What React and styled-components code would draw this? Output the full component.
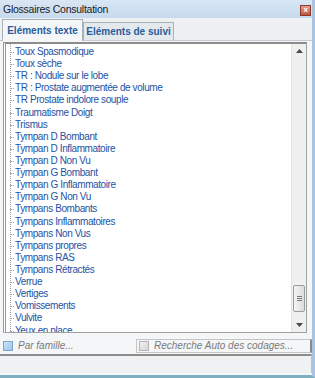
import styled, { createGlobalStyle } from "styled-components";

const Global = createGlobalStyle`
  html, body { margin: 0; padding: 0; background: #fff; }
  body { font-family: "Liberation Sans", Arial, sans-serif; }
`;

const items = [
  "Toux Spasmodique",
  "Toux sèche",
  "TR : Nodule sur le lobe",
  "TR : Prostate augmentée de volume",
  "TR Prostate  indolore souple",
  "Traumatisme Doigt",
  "Trismus",
  "Tympan D Bombant",
  "Tympan D Inflammatoire",
  "Tympan D Non Vu",
  "Tympan G Bombant",
  "Tympan G Inflammatoire",
  "Tympan G Non Vu",
  "Tympans Bombants",
  "Tympans Inflammatoires",
  "Tympans Non Vus",
  "Tympans propres",
  "Tympans RAS",
  "Tympans Rétractés",
  "Verrue",
  "Vertiges",
  "Vomissements",
  "Vulvite",
  "Yeux en place",
];

const Window = styled.div`
  width: 315px;
  height: 378px;
  box-sizing: border-box;
  background: #eef0f2;
  border-right: 3px solid #a9c4e2;
  border-bottom: 3px solid #7fb0c0;
  display: flex;
  flex-direction: column;
  overflow: hidden;
`;

const TitleBar = styled.div`
  height: 18px;
  display: flex;
  align-items: center;
  justify-content: space-between;
  padding: 0 1px 0 3px;
  background: linear-gradient(#d9e6f4, #c6d9ee);
  font-size: 10.5px;
  letter-spacing: -0.25px;
  color: #1b1b1b;
`;

const Close = styled.div`
  width: 9px;
  height: 9px;
  margin-top: 2px;
  border: 1px solid #8a3a2a;
  background: linear-gradient(#e8a08a, #c0553b);
  display: flex;
  align-items: center;
  justify-content: center;
  color: #fff;
  font-size: 8px;
  line-height: 1;
  font-weight: bold;
`;

const Tabs = styled.div`
  display: flex;
  align-items: flex-end;
  height: 22px;
  padding: 0 0 0 2px;
  border-bottom: 1px solid #c8ccd2;
`;

const Tab = styled.div`
  box-sizing: border-box;
  width: ${(p) => p.$w};
  height: ${(p) => (p.$active ? "22px" : "18px")};
  display: flex;
  align-items: center;
  justify-content: center;
  font-size: 10px;
  font-weight: bold;
  white-space: nowrap;
  color: #2a5d9a;
  background: ${(p) => (p.$active ? "#f4f6f8" : "#e4e9ee")};
  border: 1px solid #a7b1bc;
  border-bottom: none;
  margin-bottom: ${(p) => (p.$active ? "-1px" : "0")};
`;

const Body = styled.div`
  flex: 1;
  display: flex;
  flex-direction: column;
  padding: 1px 5px 0 3px;
  background: #f4f6f8;
`;

const ListBox = styled.div`
  height: 291px;
  box-sizing: border-box;
  display: flex;
  border: 1px solid #a0a0a0;
  border-left: 3px double #9a9a9a;
  border-top: 2px solid #8c8c8c;
  background: #fff;
`;

const List = styled.ul`
  flex: 1;
  margin: 0;
  padding: 2px 0 0 4px;
  list-style: none;
  overflow: hidden;
  background-image: repeating-linear-gradient(
    to bottom,
    #9aa0a8 0 1px,
    transparent 1px 2px
  );
  background-size: 1px 100%;
  background-position: 4px 0;
  background-repeat: no-repeat;
`;

const Item = styled.li`
  position: relative;
  height: 12.12px;
  line-height: 12.12px;
  padding-left: 5px;
  font-size: 10px;
  letter-spacing: -0.4px;
  color: #2453a2;
  white-space: nowrap;
  &::before {
    content: "";
    position: absolute;
    left: 0;
    top: 6px;
    width: 4px;
    border-top: 1px dotted #9aa0a8;
  }
`;

const ScrollBar = styled.div`
  width: 14px;
  display: flex;
  flex-direction: column;
  align-items: center;
  background: #f0f0f0;
  border-left: 1px solid #e4e4e4;
`;

const Arrow = styled.div`
  height: 14px;
  display: flex;
  align-items: center;
  justify-content: center;
`;

const Track = styled.div`
  flex: 1;
  width: 100%;
  display: flex;
  flex-direction: column;
  justify-content: flex-end;
  align-items: center;
  padding-bottom: 6px;
`;

const Thumb = styled.div`
  width: 12px;
  height: 27px;
  box-sizing: border-box;
  border: 1px solid #9c9c9c;
  border-radius: 2px;
  background: linear-gradient(to right, #f4f4f4, #dcdcdc);
  display: flex;
  flex-direction: column;
  align-items: center;
  justify-content: center;
  gap: 1px;
  & span {
    width: 5px;
    height: 1px;
    background: #7a7a7a;
  }
`;

const Options = styled.div`
  height: 17px;
  display: flex;
  align-items: center;
  margin: 4px -5px 0 -2px;
  font-size: 10px;
  font-style: italic;
  color: #7a7a7a;
  white-space: nowrap;
`;

const Check = styled.label`
  display: flex;
  align-items: center;
  gap: 5px;
  flex: ${(p) => (p.$grow ? 1 : "none")};
  width: ${(p) => p.$w || "auto"};
  height: 14px;
  padding-left: 2px;
  box-sizing: border-box;
  border: ${(p) => (p.$boxed ? "1px solid #c4c4c4" : "none")};
  border-right: ${(p) => (p.$boxed ? "2px solid #8a8a8a" : "none")};
`;

const Box = styled.span`
  width: 10px;
  height: 10px;
  box-sizing: border-box;
  border: 1px solid ${(p) => (p.$blue ? "#7aa6d6" : "#b4b4b4")};
  background: ${(p) =>
    p.$blue ? "linear-gradient(135deg, #cfe3f7, #9dc3ea)" : "linear-gradient(135deg, #f2f2f2, #d4d4d4)"};
`;

const Status = styled.div`
  height: 17px;
  margin: 0 -5px 2px -3px;
  border-top: 2px solid #8c8c8c;
  border-right: 1px solid #c0c0c0;
  background: #eff1f3;
`;

const UpArrow = () => (
  <svg width="7" height="4" viewBox="0 0 7 4">
    <path d="M0 4 L3.5 0 L7 4 Z" fill="#4a4a4a" />
  </svg>
);

const DownArrow = () => (
  <svg width="7" height="4" viewBox="0 0 7 4">
    <path d="M0 0 L3.5 4 L7 0 Z" fill="#4a4a4a" />
  </svg>
);

function App() {
  return (
    <Window>
      <Global />
      <TitleBar>
        <span>Glossaires Consultation</span>
        <Close>x</Close>
      </TitleBar>
      <Tabs>
        <Tab $active $w="81px">
          Eléments texte
        </Tab>
        <Tab $w="91px">Eléments de suivi</Tab>
      </Tabs>
      <Body>
        <ListBox>
          <List>
            {items.map((t) => (
              <Item key={t}>{t}</Item>
            ))}
          </List>
          <ScrollBar>
            <Arrow>
              <UpArrow />
            </Arrow>
            <Track>
              <Thumb>
                <span />
                <span />
                <span />
              </Thumb>
            </Track>
            <Arrow>
              <DownArrow />
            </Arrow>
          </ScrollBar>
        </ListBox>
        <Options>
          <Check $w="135px">
            <Box $blue />
            Par famille...
          </Check>
          <Check $boxed $grow>
            <Box />
            Recherche Auto des codages...
          </Check>
        </Options>
        <Status />
      </Body>
    </Window>
  );
}

export default App;
